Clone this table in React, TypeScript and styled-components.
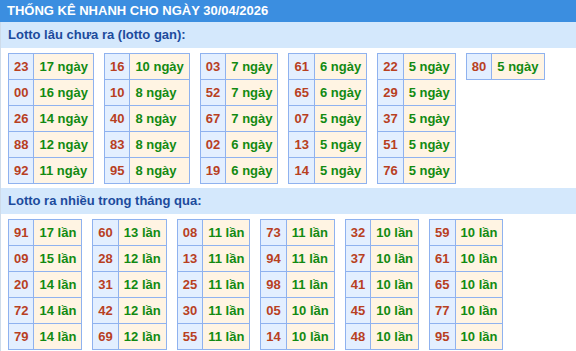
import styled, { createGlobalStyle } from "styled-components";

const GlobalStyle = createGlobalStyle`
  html, body {
    margin: 0;
    padding: 0;
    background: #ffffff;
  }
  body {
    font-family: "Liberation Sans", Arial, sans-serif;
  }
`;

const Wrapper = styled.div`
  width: 576px;
`;

const Header = styled.div`
  height: 22px;
  line-height: 21px;
  padding-left: 7px;
  background-color: #3b8ee0;
  color: #ffffff;
  font-size: 13px;
  font-weight: bold;
`;

const Box = styled.div`
  border-left: 1px solid #cddbea;
`;

const SectionTitle = styled.div`
  height: 26px;
  line-height: 26px;
  padding-left: 7px;
  background-color: #d4e8fc;
  color: #1c4b9c;
  font-size: 13px;
  font-weight: bold;
`;

const TableRow = styled.div`
  display: flex;
  flex-wrap: wrap;
  align-items: flex-start;
  gap: 10px;
  padding: 5px 0 4px 7px;
`;

const Table = styled.table`
  border-collapse: collapse;
  font-size: 13px;
  font-weight: bold;
  line-height: 15px;
`;

const NumCell = styled.td`
  border: 1px solid #8fb2ef;
  padding: 5px 5px;
  background-color: #e3efff;
  color: #b8401f;
  text-align: center;
`;

const ValueCell = styled.td`
  border: 1px solid #8fb2ef;
  padding: 5px 5px;
  background-color: #fff4e3;
  color: #128a12;
  white-space: nowrap;
`;

type Item = [string, number];

const gan: Item[][] = [
  [["23", 17], ["00", 16], ["26", 14], ["88", 12], ["92", 11]],
  [["16", 10], ["10", 8], ["40", 8], ["83", 8], ["95", 8]],
  [["03", 7], ["52", 7], ["67", 7], ["02", 6], ["19", 6]],
  [["61", 6], ["65", 6], ["07", 5], ["13", 5], ["14", 5]],
  [["22", 5], ["29", 5], ["37", 5], ["51", 5], ["76", 5]],
  [["80", 5]],
];

const nhieu: Item[][] = [
  [["91", 17], ["09", 15], ["20", 14], ["72", 14], ["79", 14]],
  [["60", 13], ["28", 12], ["31", 12], ["42", 12], ["69", 12]],
  [["08", 11], ["13", 11], ["25", 11], ["30", 11], ["55", 11]],
  [["73", 11], ["94", 11], ["98", 11], ["05", 10], ["14", 10]],
  [["32", 10], ["37", 10], ["41", 10], ["45", 10], ["48", 10]],
  [["59", 10], ["61", 10], ["65", 10], ["77", 10], ["95", 10]],
];

function LottoTable({ rows, unit }: { rows: Item[]; unit: string }) {
  return (
    <Table>
      <tbody>
        {rows.map(([num, count]) => (
          <tr key={num}>
            <NumCell>{num}</NumCell>
            <ValueCell>
              {count} {unit}
            </ValueCell>
          </tr>
        ))}
      </tbody>
    </Table>
  );
}

export default function App() {
  return (
    <Wrapper>
      <GlobalStyle />
      <Header>THỐNG KÊ NHANH CHO NGÀY 30/04/2026</Header>
      <Box>
        <SectionTitle>Lotto lâu chưa ra (lotto gan):</SectionTitle>
        <TableRow>
          {gan.map((rows, i) => (
            <LottoTable key={i} rows={rows} unit="ngày" />
          ))}
        </TableRow>
        <SectionTitle>Lotto ra nhiều trong tháng qua:</SectionTitle>
        <TableRow>
          {nhieu.map((rows, i) => (
            <LottoTable key={i} rows={rows} unit="lần" />
          ))}
        </TableRow>
      </Box>
    </Wrapper>
  );
}
